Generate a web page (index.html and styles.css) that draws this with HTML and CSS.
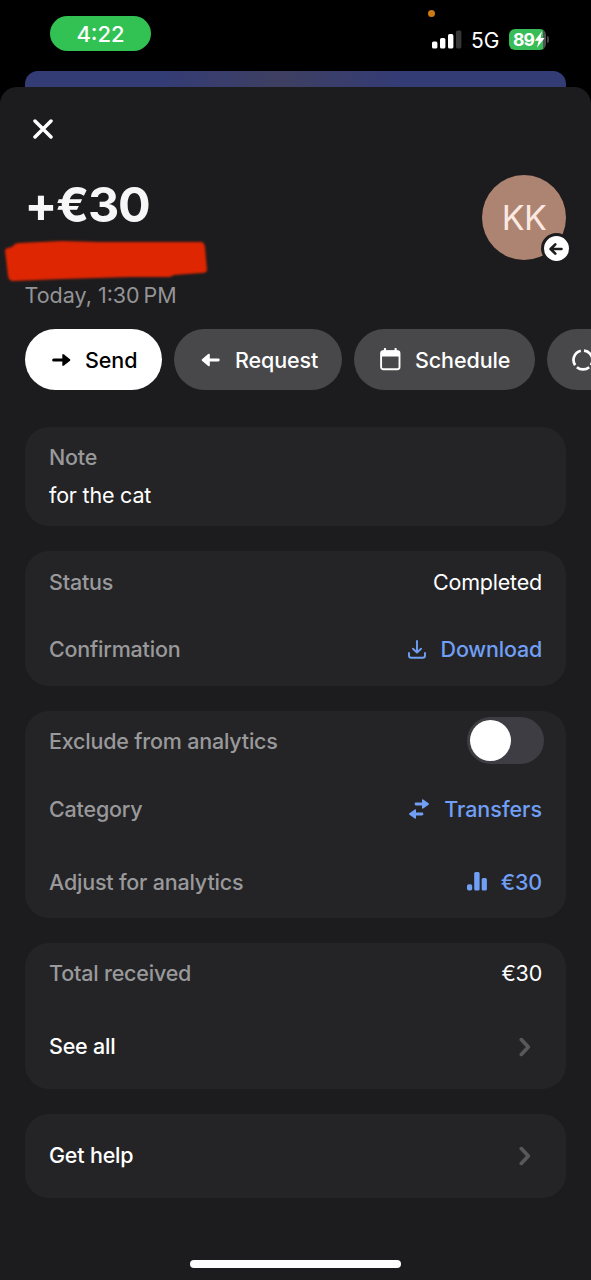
FILE: index.html
```html
<!DOCTYPE html>
<html lang="en">
<head>
<meta charset="utf-8">
<title>Transaction details</title>
<link rel="stylesheet" href="styles.css">
</head>
<body>
<div class="screen">
  <header class="status-bar">
    <div class="clock"><span>4:22</span></div>
    <div class="status-right">
      <i class="mic-dot"></i>
      <div class="status-icons">
        <svg class="signal" width="30" height="19" viewBox="0 0 30 18"><g fill="#fff"><rect x="0" y="11" width="5.4" height="7" rx="1.6"/><rect x="8" y="7.4" width="5.4" height="10.6" rx="1.6"/><rect x="16" y="3.6" width="5.4" height="14.4" rx="1.6"/></g><rect x="24" y="0" width="5.4" height="18" rx="1.6" fill="#363636"/></svg>
        <span class="network">5G</span>
        <div class="battery"><span>89</span><svg width="11" height="17" viewBox="0 0 10 16"><path d="M7.4 0.3L0.5 9.2H4.2L2.6 15.8L9.8 6.6H6Z" fill="#fff"/></svg></div>
        <i class="battery-cap"></i>
      </div>
    </div>
  </header>
  <div class="peek"></div>
  <main class="sheet">
    <svg class="close" width="20" height="20" viewBox="0 0 20 20" stroke="#fff" stroke-width="3.5" stroke-linecap="round"><path d="M2 2L18 18M18 2L2 18"/></svg>
    <section class="summary">
      <div class="details">
        <h1 class="amount">+€30</h1>
        <svg class="redaction" width="208" height="46" viewBox="0 0 208 46"><path d="M5 12Q6 10 12 9Q15 5 19 5L62 3L100 4L201 4Q204 4 205 9L207 32Q207 35 202 35L174 37L170 39L130 39L62 41L13 43Q9 43 8 38Z" fill="#df2602"/></svg>
        <p class="date">Today, 1:30&#8201;PM</p>
      </div>
      <div class="avatar"><span>KK</span>
        <div class="badge"><svg width="14" height="14" viewBox="0 0 14 14" fill="none" stroke="#1c1c1e" stroke-width="2.6" stroke-linecap="round" stroke-linejoin="round"><path d="M12.5 7H2M6.3 2.3L1.6 7L6.3 11.7"/></svg></div>
      </div>
    </section>
    <nav class="actions">
      <div class="action send"><svg width="19" height="14" viewBox="0 0 19 14"><path d="M1.7 7H12" stroke="#000" stroke-width="3.1" stroke-linecap="round"/><path d="M12 1.5L18 6.2Q18.8 7 18 7.8L12 12.5Q10.3 13.5 10.3 12V2Q10.3 .5 12 1.5Z" fill="#000"/></svg><span>Send</span></div>
      <div class="action request"><svg width="19" height="14" viewBox="0 0 19 14"><path d="M17.3 7H7" stroke="#fff" stroke-width="2.8" stroke-linecap="round"/><path d="M7.2 1L1 6.2Q.2 7 1 7.8L7.2 13Q8.8 13.9 8.8 12.3V1.7Q8.8 .1 7.2 1Z" fill="#fff"/></svg><span>Request</span></div>
      <div class="action schedule"><svg width="21" height="23" viewBox="0 0 21 23"><rect x="1.1" y="3.3" width="18.4" height="18" rx="2.2" fill="none" stroke="#fff" stroke-width="1.9"/><path d="M1 8.5V4Q1 2.4 3 2.4H17.6Q19.6 2.4 19.6 4V8.5Z" fill="#fff"/><path d="M5 1V4M15.6 1V4" stroke="#fff" stroke-width="2.2" stroke-linecap="round"/></svg><span>Schedule</span></div>
      <div class="action more"><svg width="22" height="22" viewBox="0 0 22 22" fill="none" stroke="#fff" stroke-width="2.7"><path d="M8.8 1.7A9.5 9.5 0 0 0 3.1 16.2M4.9 18.2A9.5 9.5 0 0 0 17.2 18.2M18.9 16.2A9.5 9.5 0 0 0 12 1.6"/></svg></div>
    </nav>
    <section class="cards">
      <div class="card note"><span class="label">Note</span><span class="value">for the cat</span></div>
      <div class="card">
        <div class="row r63"><span class="label">Status</span><span class="value">Completed</span></div>
        <div class="row r72"><span class="label">Confirmation</span><span class="link download"><svg width="18" height="19" viewBox="0 0 18 19" fill="none" stroke="#709ff5" stroke-width="1.9" stroke-linecap="round" stroke-linejoin="round"><path d="M9 1V12.3M5 8.7L9 12.6L13 8.7M1 13V15.5Q1 17.8 3.3 17.8H14.7Q17 17.8 17 15.5V13"/></svg><span>Download</span></span></div>
      </div>
      <div class="card">
        <div class="row r62"><span class="label">Exclude from analytics</span><i class="toggle"><i class="knob"></i></i></div>
        <div class="row r74"><span class="label">Category</span><span class="link transfers"><svg width="22" height="20" viewBox="0 0 22 20" fill="#709ff5"><path d="M8 5H16M14 15H6" stroke="#709ff5" stroke-width="2.8" stroke-linecap="round"/><path d="M15.2.5L20.6 4.3Q21.4 5 20.6 5.7L15.2 9.5Q14 10 14 9V1Q14 0 15.2.5ZM6.8 10.5L1.4 14.3Q.6 15 1.4 15.7L6.8 19.5Q8 20 8 19V11Q8 10 6.8 10.5Z"/></svg><span>Transfers</span></span></div>
        <div class="row r71"><span class="label">Adjust for analytics</span><span class="link adjust"><svg width="20" height="19" viewBox="0 0 20 19" fill="#709ff5"><rect x="0" y="12.2" width="5.2" height="6.3" rx="1.8"/><rect x="7.2" y="0" width="5.4" height="18.5" rx="1.5"/><rect x="14.7" y="6" width="5.2" height="12.5" rx="1.5"/></svg><span>€30</span></span></div>
      </div>
      <div class="card">
        <div class="row r62"><span class="label">Total received</span><span class="value euro">€30</span></div>
        <div class="row r84"><span class="title">See all</span><svg class="chevron" width="12" height="20" viewBox="0 0 12 20"><path d="M2.3 2.6L9.3 10L2.3 17.4"/></svg></div>
      </div>
      <div class="card">
        <div class="row r84"><span class="title help">Get help</span><svg class="chevron" width="12" height="20" viewBox="0 0 12 20"><path d="M2.3 2.6L9.3 10L2.3 17.4"/></svg></div>
      </div>
    </section>
    <i class="home-indicator"></i>
  </main>
</div>
</body>
</html>
```
FILE: styles.css
```css
* { box-sizing: border-box; }
body { margin: 0; background: #000; font-family: Inter, "Liberation Sans", sans-serif; }
h1, p { margin: 0; }
svg { display: block; flex: none; }
i { display: block; }
.screen { width: 591px; height: 1280px; overflow: hidden; display: flex; flex-direction: column; background: #000; }

.status-bar { height: 71px; flex: none; display: flex; justify-content: space-between; padding: 0 40px 0 50px; }
.clock { width: 101px; height: 35px; margin-top: 16px; border-radius: 18px; background: #31c253; color: #fff; display: flex; align-items: center; justify-content: center; font-size: 22px; font-weight: 500; }
.status-right { width: 119px; padding-top: 10px; }
.mic-dot { width: 7px; height: 7px; margin-left: -4px; border-radius: 50%; background: #cc7a12; }
.status-icons { display: flex; align-items: center; margin-top: 12px; height: 21px; }
.network { margin-left: 9px; width: 28px; color: #fff; font-size: 21px; line-height: 21px; white-space: nowrap; padding-top: 1px; }
.battery { margin-left: 10px; width: 37px; height: 21px; border-radius: 6px; display: flex; align-items: center; padding-left: 4px; background: linear-gradient(90deg, #36bd58 0 34px, #505052 34px); color: #fff; font-size: 17.5px; font-weight: 700; line-height: 21px; letter-spacing: -.8px; flex: none; }
.battery-cap { width: 2px; height: 7px; margin-left: 1px; border-radius: 0 2px 2px 0; background: #444; flex: none; }

.peek { height: 16px; flex: none; margin: 0 25px; border-radius: 13px 13px 0 0; background: linear-gradient(90deg, #343c76 0 25%, #3e3f61 47%, #343c76 70%); }
.sheet { flex: 1; display: flex; flex-direction: column; background: #1c1c1e; border-radius: 17px 17px 0 0; padding-top: 32px; }
.close { margin-left: 32.5px; }

.summary { height: 190px; display: flex; justify-content: space-between; padding-right: 25px; }
.details { display: flex; flex-direction: column; }
.amount { margin: 37px 0 0 24.5px; height: 58px; line-height: 58px; color: #f6f6f6; font-size: 48.5px; font-weight: 700; letter-spacing: -1.3px; white-space: nowrap; }
.redaction { margin-top: 4px; filter: blur(1px); }
.date { margin: -2px 0 0 24.5px; line-height: 26px; color: #949496; font-size: 21.5px; }
.avatar { position: relative; width: 84px; height: 85px; margin-top: 35.5px; border-radius: 50%; background: #ad8371; color: #fbe9e1; display: flex; align-items: center; justify-content: center; font-size: 34px; letter-spacing: -.5px; }
.badge { position: absolute; left: 58.5px; top: 58.5px; width: 31px; height: 31px; border: 3px solid #1c1c1e; border-radius: 50%; background: #fff; display: flex; align-items: center; justify-content: center; }

.actions { display: flex; gap: 12px; height: 61px; margin-left: 24.5px; overflow: hidden; }
.action { height: 61px; flex: none; border-radius: 31px; background: #48484a; color: #fff; display: flex; align-items: center; font-size: 21.5px; font-weight: 500; letter-spacing: -.1px; white-space: nowrap; }
.send { width: 137.5px; padding-left: 27px; gap: 14.5px; background: #fff; color: #000; }
.request { width: 168px; padding-left: 26.5px; gap: 15.5px; }
.schedule { width: 180.5px; padding-left: 26px; gap: 14px; }
.more { width: 180px; padding-left: 25px; }

.cards { display: flex; flex-direction: column; gap: 25px; margin: 36.5px 25px 0; }
.card { border-radius: 24px; background: #242426; padding: 0 24px; font-size: 21.5px; line-height: 28px; letter-spacing: -.2px; }
.note { height: 99px; display: flex; flex-direction: column; gap: 10px; padding-top: 16.5px; }
.row { display: flex; align-items: center; justify-content: space-between; }
.r62 { height: 62px; }
.r63 { height: 63px; }
.r71 { height: 71px; }
.r72 { height: 72px; }
.r74 { height: 74px; }
.r84 { height: 84px; }
.row > span { margin-top: -1px; }
.label { color: #99999b; font-weight: 500; }
.value { color: #fff; }
.title { color: #fff; font-weight: 500; }
.link { display: flex; align-items: center; color: #709ff5; font-weight: 500; }
.download { gap: 15px; }
.transfers { gap: 14px; letter-spacing: 0; }
.adjust { gap: 14px; }
.toggle { width: 77px; height: 47px; margin: -2px -2px 0 0; padding: 3px; border-radius: 24px; background: #3e3d43; }
.knob { width: 41px; height: 41px; border-radius: 50%; background: #fff; }
.chevron { margin-right: 11px; fill: none; stroke: #58585a; stroke-width: 3.7; stroke-linecap: round; stroke-linejoin: round; }
.home-indicator { width: 211px; height: 8px; margin: auto auto 12px; border-radius: 4px; background: #fff; }
```
